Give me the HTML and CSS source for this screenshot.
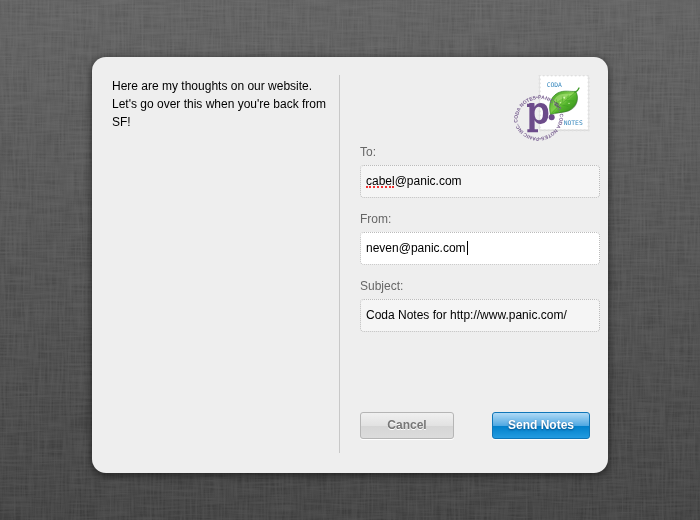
FILE: index.html
```html
<!DOCTYPE html>
<html lang="en">
  <head>
    <meta charset="UTF-8" />
    <title>Coda Notes</title>
    <meta name="viewport" content="width=device-width, initial-scale=1.0" />
    <link rel="stylesheet" href="styles.css">
  </head>
  <body>
    <!-- linen texture: horizontal and vertical threads -->
    <svg class="linen" aria-hidden="true">
      <filter id="weft" x="0" y="0" width="100%" height="100%">
        <feTurbulence type="fractalNoise" baseFrequency="0.03 0.5" numOctaves="3" seed="4" />
        <feColorMatrix values="0 0 0 0 1  0 0 0 0 1  0 0 0 0 1  1.2 0 0 0 -0.3" />
      </filter>
      <filter id="warp" x="0" y="0" width="100%" height="100%">
        <feTurbulence type="fractalNoise" baseFrequency="0.5 0.03" numOctaves="3" seed="9" />
        <feColorMatrix values="0 0 0 0 1  0 0 0 0 1  0 0 0 0 1  1.2 0 0 0 -0.3" />
      </filter>
      <rect width="100%" height="100%" filter="url(#weft)" />
      <rect width="100%" height="100%" filter="url(#warp)" />
    </svg>

    <form class="card">
      <div class="message">
        <textarea class="message-text" aria-label="Message">Here are my thoughts on our website. Let's go over this when you're back from SF!</textarea>
      </div>

      <div class="details">
        <svg class="stamp" viewBox="21 21 234 204" role="img" aria-label="Coda Notes">
          <defs>
            <linearGradient id="leaf" x1="0" y1="0" x2="1" y2="1">
              <stop offset="0" stop-color="#3d9a20" />
              <stop offset="0.45" stop-color="#7fce4a" />
              <stop offset="0.55" stop-color="#55b52c" />
              <stop offset="1" stop-color="#267e12" />
            </linearGradient>
            <path id="ring" d="M38 164 A65 65 0 0 1 164 136 A65 65 0 0 1 38 164" />
          </defs>
          <rect class="stamp-shade" x="104" y="24" width="147" height="164" />
          <rect class="stamp-paper" x="105" y="23" width="145" height="162" />
          <rect class="stamp-holes" x="104" y="22" width="147" height="165" />
          <text class="stamp-word" x="125" y="56">CODA</text>
          <text class="stamp-word" x="176" y="170">NOTES</text>
          <path class="leaf-shade" d="M138 144 C152 134 172 138 193 129 C217 117 222 98 216 80 L198 108 Z" />
          <path d="M137 141 C130 112 135 88 158 75 C177 65 198 72 212 70 C224 90 214 118 191 128 C168 136 152 131 137 141 Z" fill="url(#leaf)" stroke="#287e16" stroke-width="2" />
          <path class="leaf-stem" d="M210 73 Q218 70 222 60" />
          <path class="leaf-gloss" d="M144 114 C145 95 153 83 169 79 C183 76 198 79 206 76 C192 86 163 89 144 114 Z" />
          <path class="leaf-vein" d="M138 138 C158 113 186 96 211 73 M158 116 L154 94 M173 103 L172 85 M188 93 L190 80 M165 110 L190 115 M182 98 L207 99" />
          <circle class="dew" cx="178" cy="89" r="3" />
          <circle class="dew" cx="192" cy="106" r="2" />
          <circle class="dew" cx="166" cy="104" r="2" />
          <text class="postmark"><textPath href="#ring">CODA NOTES•PANIC INC. CODA NOTES•PANIC INC.</textPath></text>
          <text class="panic-p" x="65" y="168">p</text>
          <path class="panic-logo" d="M66 107 H80 V117 H66 Z M67 184 H99 V193 H67 Z" />
          <circle class="panic-logo" cx="140" cy="148" r="9" />
          <path class="postmark-smudge" d="M147 101 L162 109 M150 110 L165 119" />
        </svg>

        <div class="field">
          <label for="to">To:</label>
          <div class="field-box">
            <input type="text" id="to" value="cabel@panic.com" spellcheck="false" />
            <span class="misspelt"></span>
          </div>
        </div>
        <div class="field">
          <label for="from">From:</label>
          <div class="field-box">
            <input class="active" type="text" id="from" value="neven@panic.com" spellcheck="false" />
            <span class="cursor"></span>
          </div>
        </div>
        <div class="field">
          <label for="subject">Subject:</label>
          <div class="field-box">
            <input type="text" id="subject" value="Coda Notes for http://www.panic.com/" spellcheck="false" />
          </div>
        </div>

        <div class="actions">
          <button class="cancel" type="button">Cancel</button>
          <button class="send" type="button">Send Notes</button>
        </div>
      </div>
    </form>
  </body>
</html>
```

FILE: styles.css
```css
* {
  box-sizing: border-box;
}

body {
  margin: 0;
  min-height: 100vh;
  padding: 57px 20px 47px;
  background: linear-gradient(#5c5c5c, #3c3c3c);
  font-family: "Liberation Sans", Arial, sans-serif;
  font-size: 12px;
  line-height: 18px;
  color: #000;
}

.linen {
  position: fixed;
  top: 0;
  left: 0;
  width: 100%;
  height: 100%;
  opacity: 0.12;
}

.card {
  position: relative;
  display: grid;
  grid-template-columns: minmax(0, 57fr) minmax(0, 65fr);
  max-width: 516px;
  margin: 0 auto;
  padding: 18px 8px 20px 20px;
  background: #eee;
  border-radius: 14px;
  box-shadow: 0 2px 8px rgba(0, 0, 0, 0.6);
}

.message {
  display: flex;
  padding-right: 8px;
  border-right: 1px solid #c8c8c8;
}

.message-text {
  flex: 1;
  min-width: 0;
  padding: 2px 0;
  border: 0;
  background: none;
  font: inherit;
  color: inherit;
  resize: none;
  outline: none;
}

.details {
  display: flex;
  flex-direction: column;
  padding-left: 20px;
}

.stamp {
  width: 78px;
  height: 68px;
  margin-right: 10px;
  align-self: flex-end;
}

.stamp-shade {
  fill: #cfcfcf;
}

.stamp-paper {
  fill: #fff;
}

.stamp-holes {
  fill: none;
  stroke: #e0e0e0;
  stroke-width: 7px;
  stroke-linecap: round;
  stroke-dasharray: 0 12;
}

.stamp-word {
  font-family: "DejaVu Sans Mono", monospace;
  font-size: 19px;
  fill: #3587bd;
}

.leaf-shade {
  fill: rgba(0, 0, 0, 0.3);
}

.leaf-stem {
  fill: none;
  stroke: #3f9a26;
  stroke-width: 4px;
  stroke-linecap: round;
}

.leaf-gloss {
  fill: rgba(200, 245, 150, 0.4);
}

.leaf-vein {
  fill: none;
  stroke: #2f8f1a;
  stroke-width: 1px;
}

.dew {
  fill: #d5f7b5;
}

.postmark {
  font-size: 15px;
  font-weight: bold;
  fill: #7a6192;
}

.postmark-smudge {
  fill: none;
  stroke: #4c4a55;
  stroke-width: 3px;
  stroke-dasharray: 4 2;
}

.panic-p {
  font-size: 114px;
  font-weight: bold;
  fill: #6c4b8a;
}

.panic-logo {
  fill: #6c4b8a;
}

.field {
  margin-bottom: 12px;
}

.field label {
  display: block;
  margin-bottom: 4px;
  color: #666;
}

.field-box {
  position: relative;
}

.field input {
  display: block;
  width: 100%;
  height: 33px;
  padding: 0 5px 2px;
  border: 1px dotted #bbb;
  border-radius: 4px;
  background: #f5f5f5;
  font: inherit;
  color: #000;
  outline: none;
}

.field input.active {
  background: #fff;
}

/* spelling mark under the first word */
.misspelt {
  position: absolute;
  left: 6px;
  top: 21px;
  width: 28px;
  border-bottom: 2px dotted #f03030;
}

.cursor {
  position: absolute;
  left: 107px;
  top: 9px;
  width: 1px;
  height: 14px;
  background: #000;
}

.actions {
  display: flex;
  justify-content: space-between;
  margin: 68px 10px 14px 0;
}

.actions button {
  height: 27px;
  padding: 0 0 2px;
  border-radius: 3px;
  font: inherit;
  font-weight: bold;
  cursor: pointer;
}

.cancel {
  width: 94px;
  border: 1px solid #b5b5b5;
  background: linear-gradient(#f0f0f0, #e2e2e2 50%, #d5d5d5 50%, #dcdcdc);
  box-shadow: 0 1px 0 #fff;
  color: #777;
  text-shadow: 0 1px 0 #fff;
}

.send {
  width: 98px;
  border: 1px solid #0f76b8;
  background: linear-gradient(#b0daf6, #51a9e2 50%, #007fca 50%, #229be0);
  box-shadow: 0 1px 0 #fff;
  color: #fff;
  text-shadow: 0 1px 2px rgba(0, 50, 100, 0.7);
}
```
